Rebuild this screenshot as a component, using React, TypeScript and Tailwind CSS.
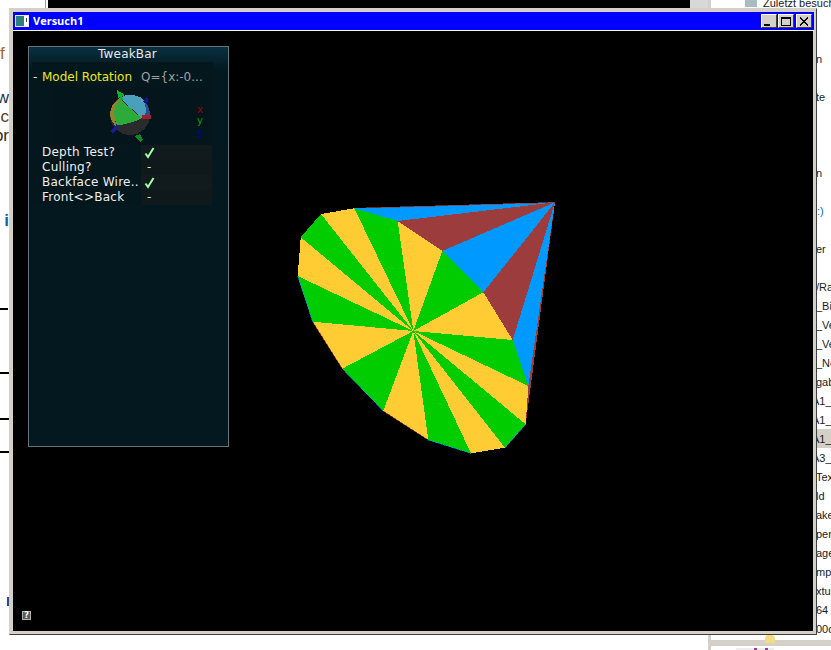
const rightRows: { t: string; cls?: string }[] = [
  { t: "n" }, { t: "" }, { t: "te" }, { t: "" }, { t: "" }, { t: "" }, { t: "n" }, { t: "" },
  { t: "C:)", cls: "-ml-[7px] text-[#0066cc]" }, { t: "" }, { t: "er" }, { t: "" },
  { t: "/Ra" }, { t: "_Bil" }, { t: "_Ve" }, { t: "_Ve" }, { t: "_No" }, { t: "gab" },
  { t: "A1_", cls: "-ml-[4px]" }, { t: "A1_", cls: "-ml-[4px]" },
  { t: "A1_", cls: "-ml-[4px] bg-[#d4d0c8]" },
  { t: "A3_", cls: "-ml-[4px]" }, { t: "Tex" }, { t: "ld" }, { t: "ake" }, { t: "per" },
  { t: "age" }, { t: "mpl" }, { t: "xtu" }, { t: "64" }, { t: "00d" },
];

const C: [number, number] = [413.3, 331];
const rim: [number, number][] = [
  [300.7, 237.3], [321, 214], [354.3, 208.3], [397.7, 221], [442.3, 251], [483.3, 292.3],
  [512.7, 340], [528.3, 386], [525.7, 424.3], [505, 447.7], [471, 453.3], [428.3, 440],
  [383.3, 411], [342.3, 368.7], [312.7, 321.7], [297.7, 276], [300.7, 237.3],
];
const A = "555,202.3";
const GREEN = "#00cc00";
const YELLOW = "#ffcc33";
const BLUE = "#0099ff";
const BROWN = "#9c3c3c";

function Mesh() {
  return (
    <svg
      className="absolute left-0 top-0"
      width={800}
      height={600}
      viewBox="13 31 800 600"
      shapeRendering="crispEdges"
    >
      <polygon points={`${A} 354.3,208.3 397.7,221`} fill={BLUE} />
      <polygon points={`${A} 397.7,221 442.3,251`} fill={BROWN} />
      <polygon points={`${A} 442.3,251 483.3,292.3`} fill={BLUE} />
      <polygon points={`${A} 483.3,292.3 512.7,340`} fill={BROWN} />
      <polygon points={`${A} 512.7,340 528.3,386`} fill={BLUE} />
      <polygon points={`${A} 528.3,386 525.7,424.3`} fill={BROWN} />
      {rim.slice(0, -1).map((p, i) => (
        <polygon
          key={i}
          points={`${C[0]},${C[1]} ${p[0]},${p[1]} ${rim[i + 1][0]},${rim[i + 1][1]}`}
          fill={i % 2 === 0 ? GREEN : YELLOW}
        />
      ))}
      <line x1="366" y1="208" x2="555" y2="202.5" stroke={BROWN} strokeWidth="0.7" />
      <line x1="312.7" y1="321.7" x2="342.3" y2="368.7" stroke={BROWN} strokeWidth="0.6" />
      <line x1="383.3" y1="411" x2="428.3" y2="440" stroke={BROWN} strokeWidth="0.6" />
      <line x1="342.3" y1="368.7" x2="383.3" y2="411" stroke={BLUE} strokeWidth="0.6" />
      <line x1="428.3" y1="440" x2="471" y2="453.3" stroke={BLUE} strokeWidth="0.6" />
      <line x1="297.7" y1="276" x2="312.7" y2="321.7" stroke={BLUE} strokeWidth="0.6" />
      <line x1="505" y1="447.7" x2="525.7" y2="424.3" stroke={BLUE} strokeWidth="0.6" />
    </svg>
  );
}

function RotoBall() {
  return (
    <svg width={156} height={57} viewBox="52 87 156 57" className="block" shapeRendering="crispEdges">
      <circle cx="130" cy="115" r="20" fill="#2b2b2d" />
      <path d="M120 97.5 Q131 92 142 98 Q149.5 105 150 115 L141.7 118.3 Z" fill="#4aa0bc" />
      <path d="M143 99 Q149.5 105 150 115 L145 117 Q147 106 143 99 Z" fill="#2a4f90" />
      <path d="M120.5 97.5 Q110 104 110 115 Q111 122 116 126 Q113 112 120.5 100 Z" fill="#94802f" />
      <path d="M120.7 99.5 L141.7 118.3 Q130 124 117.3 125.5 Q113.5 118 114.5 110 Q116 103 120.7 99.5 Z" fill="#2dab3a" />
      <polygon points="117,90 125,95 122,96.5 123,100 120,100 119.5,97 118,98" fill="#10b02c" />
      <polygon points="135,136 140,134 143,140 140,142" fill="#0d8a24" />
      <polygon points="142,115 151,115 151,119 142,119" fill="#a11f28" />
      <polygon points="143,102 146,97 149,99 147,104" fill="#16167e" />
      <polygon points="110,131 116,125 119,127 113,133" fill="#1a1a9a" />
      <text x="197" y="113" fontSize="10" fontFamily="'DejaVu Sans', sans-serif" fill="#a00000">x</text>
      <text x="197" y="124" fontSize="10" fontFamily="'DejaVu Sans', sans-serif" fill="#00a000">y</text>
      <text x="197" y="137" fontSize="10" fontFamily="'DejaVu Sans', sans-serif" fill="#0000b0">z</text>
    </svg>
  );
}

function Check() {
  return (
    <svg width={11} height={12} viewBox="0 0 11 12" className="block">
      <path d="M1.5 6.5 L4 10 L9.5 1" fill="none" stroke="#a8ffa8" strokeWidth="2" />
    </svg>
  );
}

function Row({ label, on, alt }: { label: string; on: boolean; alt?: boolean }) {
  return (
    <div className="flex h-[15px] items-center">
      <div className="w-[109px] pl-[10px] tracking-[0.25px] whitespace-nowrap text-[#f0f0f0]">{label}</div>
      <div className={`flex h-full w-[71px] items-center pl-[3px] ${alt ? "bg-[#0f191b]" : "bg-[#111a1c]"}`}>
        {on ? <Check /> : <span className="pl-[3px] text-[#a8ffa8]">-</span>}
      </div>
    </div>
  );
}

function TweakBar() {
  return (
    <div className="absolute left-[15px] top-[15px] flex h-[401px] w-[201px] flex-col border border-[#64767c] bg-gradient-to-b from-[#0a3040] via-[#03181f] via-[6%] to-[#04191f] font-['DejaVu_Sans',sans-serif] text-[12px] leading-[15px]">
      <div className="h-[14px] pr-[2px] text-center tracking-[0.2px] text-[#e8e8e8]">TweakBar</div>
      <div className="ml-[3px] mt-[1px] w-[181px] bg-[#03171d] pt-[8px]">
        <div className="flex h-[15px] items-center whitespace-nowrap">
          <span className="w-[10px] pl-px text-[#f0f0f0]">-</span>
          <span className="w-[99px] text-[#e8e820]">Model Rotation</span>
          <span className="text-[#a0a0a0]">Q={"{"}x:-0...</span>
        </div>
        <div className="ml-[20px] mt-[2px] h-[58px] w-[156px] bg-[#04161c]">
          <RotoBall />
        </div>
        <Row label="Depth Test?" on />
        <Row label="Culling?" on={false} alt />
        <Row label="Backface Wire.." on />
        <Row label="Front<>Back" on={false} alt />
      </div>
    </div>
  );
}

function TitleButton({ children, cls = "" }: { children: React.ReactNode; cls?: string }) {
  return (
    <div
      className={`flex h-[14px] w-[16px] items-center justify-center border border-t-white border-l-white border-r-[#404040] border-b-[#404040] bg-[#d4d0c8] ${cls}`}
    >
      {children}
    </div>
  );
}

function Win() {
  return (
    <div className="absolute left-[9px] top-[8px] flex h-[627px] w-[808px] flex-col border border-b-[#404040] border-r-[#404040] border-l-[#d4d0c8] border-t-[#d4d0c8] bg-[#d4d0c8] p-[2px]">
      <div className="ml-px mt-px flex h-[18px] items-center bg-[#0000ff] pl-[2px] pr-[2px]">
        <svg width={14} height={14} viewBox="0 0 14 14" className="block shrink-0">
          <rect x="0" y="1" width="14" height="12" fill="#e8e8e8" />
          <rect x="1" y="2" width="8" height="10" fill="#2c7f7a" />
          <rect x="9" y="2" width="4" height="10" fill="#ffffff" />
          <rect x="11" y="4" width="1" height="4" fill="#404040" />
        </svg>
        <span className="ml-[4px] font-['Open_Sans',sans-serif] text-[11px] font-bold text-white">Versuch1</span>
        <div className="ml-auto flex items-center">
          <TitleButton>
            <div className="mt-[7px] h-[2px] w-[6px] -translate-x-[2px] bg-black" />
          </TitleButton>
          <TitleButton cls="ml-px">
            <div className="h-[9px] w-[10px] border border-t-2 border-black" />
          </TitleButton>
          <TitleButton cls="ml-[2px]">
            <svg width={10} height={9} viewBox="0 0 10 9" className="block" shapeRendering="crispEdges">
              <path d="M1 0.5 L9 8.5 M9 0.5 L1 8.5" stroke="#000" strokeWidth="1.6" />
            </svg>
          </TitleButton>
        </div>
      </div>
      <div className="ml-px h-px bg-white" />
      <div className="relative ml-px h-[600px] w-[800px] overflow-hidden bg-black">
        <Mesh />
        <TweakBar />
        <div className="absolute left-[9px] top-[580px] flex h-[9px] w-[9px] items-center justify-center border border-[#b0b0b0] bg-[#5a5a5a] font-['DejaVu_Sans',sans-serif] text-[8px] font-bold leading-none text-white">
          ?
        </div>
      </div>
    </div>
  );
}

export default function App() {
  return (
    <div className="relative flex h-[650px] w-[831px] flex-col overflow-hidden bg-white font-['Liberation_Sans',sans-serif] text-[11px] text-[#1a1a1a]">
      {/* top strip of the windows behind */}
      <div className="flex h-[8px] shrink-0 overflow-hidden">
        <div className="w-[45px] shrink-0" />
        <div className="w-px shrink-0 bg-[#a0a0a0]" />
        <div className="w-[2px] shrink-0" />
        <div className="w-[642px] shrink-0 bg-black" />
        <div className="w-[18px] shrink-0 bg-[#d8d8d8]" />
        <div className="w-[3px] shrink-0 bg-[#d4d0c8]" />
        <div className="flex shrink-0 items-start pl-[34px]">
          <div className="-mt-[2px] h-[9px] w-[12px] bg-[#a9bcc4]" />
          <span className="-mt-[4px] ml-[6px] whitespace-nowrap leading-[14px]">Zuletzt besuch</span>
        </div>
      </div>

      <div className="flex min-h-0 flex-1">
        {/* left document fragment */}
        <div className="flex w-[9px] shrink-0 flex-col overflow-hidden text-[17px] leading-[19px]">
          <div className="mt-[36px] h-[19px] text-[#a8661a]">f</div>
          <div className="mt-[25px] flex h-[19px] justify-end text-[#20364f]">w</div>
          <div className="flex h-[19px] justify-end text-[#5a3a20]">c</div>
          <div className="flex h-[19px] justify-end text-[#3a2a20]">or</div>
          <div className="mt-[66px] flex h-[19px] justify-end font-bold text-[#1a5fb4]">i</div>
          <div className="mt-[78px] h-[2px] w-[8px] bg-black" />
          <div className="mt-[62px] h-[2px] w-[9px] bg-black" />
          <div className="mt-[44px] h-[2px] w-[9px] bg-black" />
          <div className="mt-[31px] h-[2px] w-[9px] bg-black" />
          <div className="ml-[7px] mt-[144px] h-[9px] w-[2px] bg-[#2a4a9a]" />
        </div>

        <div className="flex-1" />

        {/* right explorer pane */}
        <div className="relative flex w-[123px] shrink-0 flex-col border-l-[3px] border-[#d4d0c8]">
          <div className="ml-[105px] h-[632px] shrink-0 overflow-hidden pt-[41px]">
            {rightRows.map((r, i) => (
              <div key={i} className={`h-[19px] whitespace-nowrap leading-[21px] ${r.cls ?? ""}`}>
                {r.t}
              </div>
            ))}
          </div>
          <div className="h-[6px] shrink-0 bg-[#d4d0c8]" />
          <div className="ml-[25px] mt-[2px] flex h-[2px] w-[38px] justify-end gap-[8px] bg-[#eeeeee] pr-[6px]">
            <div className="h-[2px] w-[3px] bg-[#9b3a9b]" />
            <div className="h-[2px] w-[3px] bg-[#9b3a9b]" />
          </div>
        </div>
      </div>

      <Win />
      <div className="absolute left-[765px] top-[635px] h-[8px] w-[10px] rounded-t-sm bg-[#f3dc86]" />
    </div>
  );
}
